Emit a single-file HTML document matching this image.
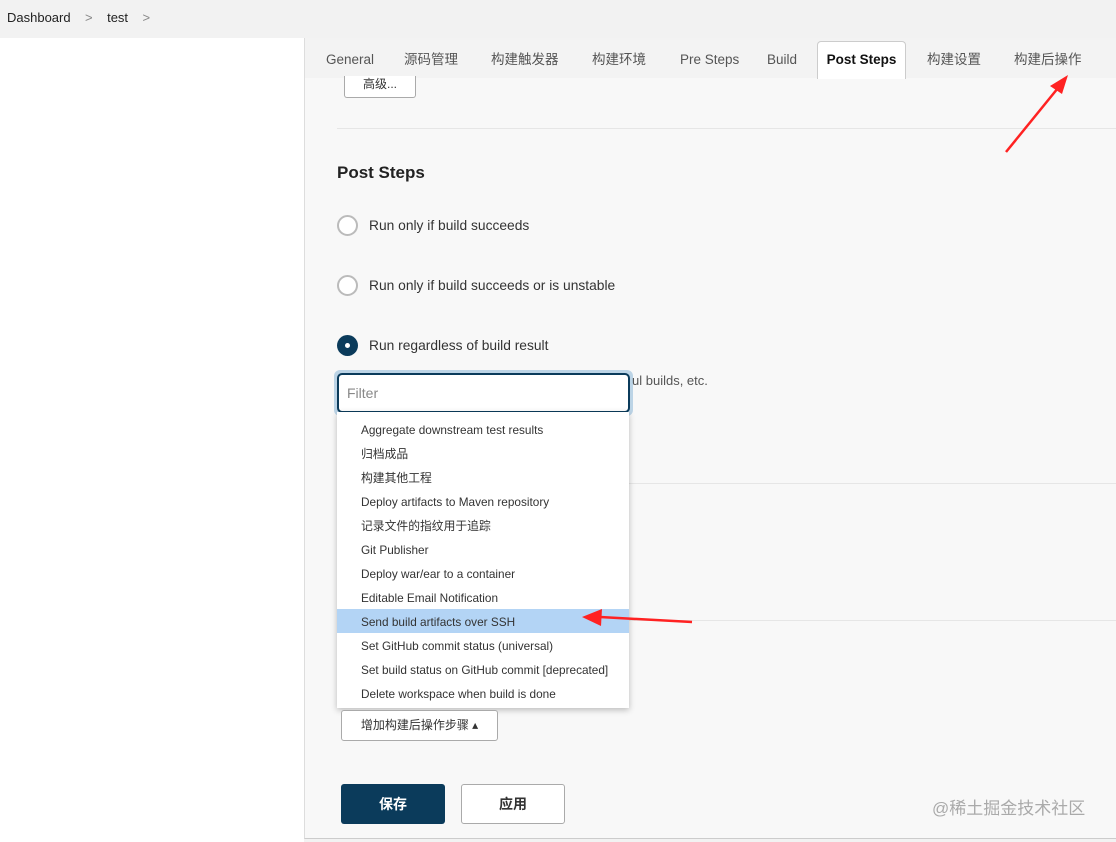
<!DOCTYPE html>
<html><head><meta charset="utf-8"><style>
*{box-sizing:border-box;margin:0;padding:0}
body{width:1116px;height:842px;overflow:hidden;background:#f2f2f2;font-family:"Liberation Sans","Noto Sans CJK SC",sans-serif;color:#333;position:relative;line-height:18px}
.a{position:absolute}
.crumb{top:9px;left:7px;font-size:13px;color:#222}
.left{left:0;top:38px;width:304px;height:804px;background:#fff}
.main{left:304px;top:38px;width:812px;height:801px;background:#f8f8f8;border-left:1px solid #ddd;border-bottom:1px solid #ccc}
.tabs{left:305px;top:38px;width:811px;height:40px;background:#f3f3f3}
.tab{position:absolute;top:51px;font-size:13.5px;color:#555;line-height:18px}
.act{left:817px;top:41px;width:89px;height:38px;background:#fff;border:1px solid #ccc;border-bottom:none;border-radius:4px 4px 0 0;font-weight:bold;font-size:13.5px;color:#111;text-align:center;line-height:36px}
.btn{background:#fff;border:1px solid #aaa;border-radius:3px;font-size:12px;text-align:center;color:#333}
.hr{height:1px;background:#e6e6e6}
.radio{width:21px;height:21px;border:2px solid #bbb;border-radius:50%;background:#fff}
.rl{font-size:13.8px;color:#333}
.menu{left:337px;top:412px;width:292px;height:296px;background:#fff;box-shadow:0 2px 6px rgba(0,0,0,.25)}
.mi{position:absolute;left:24px;font-size:11.8px;color:#333;line-height:16px;height:16px}
</style></head><body>
<div class="a crumb">Dashboard &nbsp;&nbsp;&nbsp;<span style="color:#888">&gt;</span>&nbsp;&nbsp;&nbsp; test &nbsp;&nbsp;&nbsp;<span style="color:#888">&gt;</span></div>
<div class="a left"></div>
<div class="a main"></div>
<div class="a tabs"></div>
<div class="tab" style="left:326px">General</div>
<div class="tab" style="left:404px">源码管理</div>
<div class="tab" style="left:491px">构建触发器</div>
<div class="tab" style="left:592px">构建环境</div>
<div class="tab" style="left:680px">Pre Steps</div>
<div class="tab" style="left:767px">Build</div>
<div class="a act">Post Steps</div>
<div class="tab" style="left:927px">构建设置</div>
<div class="tab" style="left:1014px">构建后操作</div>
<div class="a btn" style="left:344px;top:76px;width:72px;height:22px;line-height:16px;border-top:none;border-radius:0 0 3px 3px">高级...</div>
<div class="a hr" style="left:337px;top:128px;width:779px"></div>
<div class="a" style="left:337px;top:163px;font-size:17px;font-weight:bold;color:#222;line-height:20px">Post Steps</div>
<div class="a radio" style="left:337px;top:215px"></div><div class="a rl" style="left:369px;top:217px">Run only if build succeeds</div>
<div class="a radio" style="left:337px;top:275px"></div><div class="a rl" style="left:369px;top:277px">Run only if build succeeds or is unstable</div>
<div class="a radio" style="left:337px;top:335px;border:none;background:#0b3b5b"><div style="position:absolute;left:8px;top:8px;width:5px;height:5px;border-radius:50%;background:#fff"></div></div><div class="a rl" style="left:369px;top:337px">Run regardless of build result</div>
<div class="a hr" style="left:629px;top:483px;width:487px"></div>
<div class="a hr" style="left:629px;top:620px;width:487px"></div>
<div class="a" style="left:334px;top:370px;width:299px;height:46px;border-radius:6px;background:#bcd4e6"></div>
<div class="a" style="left:337px;top:373px;width:293px;height:40px;border:2px solid #0b3b5b;border-radius:5px;background:#fff;font-size:14px;color:#888;padding:9px 8px">Filter</div>
<div class="a" style="left:632px;top:372px;font-size:13px;color:#555">ul builds, etc.</div>
<div class="a menu">
<div class="mi" style="top:10px">Aggregate downstream test results</div>
<div class="mi" style="top:34px">归档成品</div>
<div class="mi" style="top:58px">构建其他工程</div>
<div class="mi" style="top:82px">Deploy artifacts to Maven repository</div>
<div class="mi" style="top:106px">记录文件的指纹用于追踪</div>
<div class="mi" style="top:130px">Git Publisher</div>
<div class="mi" style="top:154px">Deploy war/ear to a container</div>
<div class="mi" style="top:178px">Editable Email Notification</div>
<div style="position:absolute;left:0;top:197px;width:292px;height:24px;background:#b3d4f5"></div>
<div class="mi" style="top:202px">Send build artifacts over SSH</div>
<div class="mi" style="top:226px">Set GitHub commit status (universal)</div>
<div class="mi" style="top:250px">Set build status on GitHub commit [deprecated]</div>
<div class="mi" style="top:274px">Delete workspace when build is done</div>
</div>
<div class="a btn" style="left:341px;top:710px;width:157px;height:31px;line-height:29px">增加构建后操作步骤 ▴</div>
<div class="a" style="left:341px;top:784px;width:104px;height:40px;background:#0b3b5b;border-radius:3px;color:#fff;font-weight:bold;font-size:14px;text-align:center;line-height:40px">保存</div>
<div class="a btn" style="left:461px;top:784px;width:104px;height:40px;line-height:38px;font-size:14px;font-weight:bold">应用</div>
<div class="a" style="left:932px;top:798px;font-size:17px;color:#aaa;line-height:22px">@稀土掘金技术社区</div>
<svg class="a" style="left:0;top:0" width="1116" height="842">
<path d="M1006 152 L1058 88" stroke="#f22" stroke-width="2.5"/>
<path d="M1068 75 L1050 86 L1062 94 Z" fill="#f22"/>
<path d="M692 622 L600 617" stroke="#f22" stroke-width="2.5"/>
<path d="M582 617 L602 609 L601 626 Z" fill="#f22"/>
</svg>
</body></html>
